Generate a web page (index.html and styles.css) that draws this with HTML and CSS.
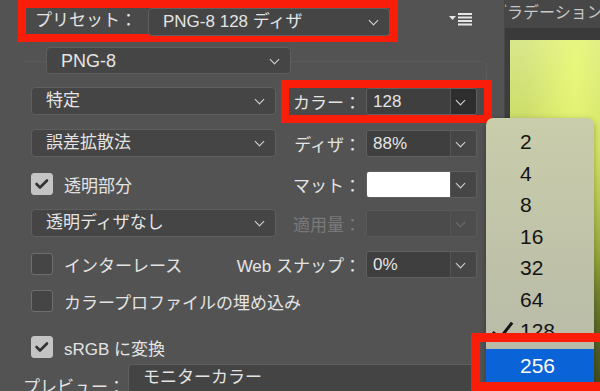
FILE: index.html
```html
<!DOCTYPE html>
<html lang="ja">
<head>
  <meta charset="UTF-8">
  <meta name="viewport" content="width=device-width, initial-scale=1.0">
  <title>Web 用に保存</title>
  <link rel="stylesheet" href="styles.css">
</head>
<body>
  <div class="window">
    <div class="panel">
      <!-- Preset -->
      <div class="preset-row">
        <div class="preset callout">
          <span class="preset-label">プリセット：</span>
          <div class="preset-select select">PNG-8 128 ディザ</div>
        </div>
        <svg class="panel-menu" width="24" height="14" viewBox="0 0 24 14">
          <polygon points="0,4 7,4 3.5,8" fill="#e6e6e6"/>
          <rect x="9" y="1" width="14" height="2" fill="#e6e6e6"/>
          <rect x="9" y="4.5" width="14" height="2" fill="#e6e6e6"/>
          <rect x="9" y="8" width="14" height="2" fill="#e6e6e6"/>
          <rect x="9" y="11.5" width="14" height="2" fill="#e6e6e6"/>
        </svg>
      </div>

      <!-- Format settings -->
      <div class="group">
        <div class="select format">PNG-8</div>

        <div class="row row-a">
          <div class="cell"><div class="select">特定</div></div>
          <div class="option">
            <div class="option-box callout">
              <span class="option-label">カラー：</span>
              <div class="combo">
                <span class="combo-value">128</span>
                <span class="combo-button active"></span>
              </div>
            </div>
          </div>
        </div>

        <div class="row row-b">
          <div class="cell"><div class="select">誤差拡散法</div></div>
          <div class="option">
            <span class="option-label">ディザ：</span>
            <div class="combo">
              <span class="combo-value">88%</span>
              <span class="combo-button"></span>
            </div>
          </div>
        </div>

        <div class="row row-c">
          <div class="cell"><label class="check checked">透明部分</label></div>
          <div class="option">
            <span class="option-label">マット：</span>
            <div class="combo">
              <span class="combo-value swatch"></span>
              <span class="combo-button"></span>
            </div>
          </div>
        </div>

        <div class="row row-d">
          <div class="cell"><div class="select">透明ディザなし</div></div>
          <div class="option disabled">
            <span class="option-label">適用量：</span>
            <div class="combo">
              <span class="combo-value"></span>
              <span class="combo-button"></span>
            </div>
          </div>
        </div>

        <div class="row row-e">
          <div class="cell"><label class="check">インターレース</label></div>
          <div class="option">
            <span class="option-label">Web スナップ：</span>
            <div class="combo">
              <span class="combo-value">0%</span>
              <span class="combo-button"></span>
            </div>
          </div>
        </div>

        <div class="row row-f">
          <div class="cell"><label class="check">カラープロファイルの埋め込み</label></div>
        </div>

        <div class="row row-g">
          <div class="cell"><label class="check checked">sRGB に変換</label></div>
        </div>
      </div>

      <div class="preview-row">
        <span class="preview-label">プレビュー：</span>
        <div class="select preview-select">モニターカラー</div>
      </div>
    </div>

    <div class="document">
      <div class="doc-tab">グラデーション</div>
      <div class="doc-bar"></div>
      <div class="doc-body">
        <div class="canvas"></div>
      </div>
    </div>
  </div>

  <!-- Colour count menu -->
  <ul class="popup">
    <li>2</li>
    <li>4</li>
    <li>8</li>
    <li>16</li>
    <li>32</li>
    <li>64</li>
    <li class="current">128</li>
    <li class="selected">256</li>
  </ul>
  <div class="callout-menu"></div>
</body>
</html>
```

FILE: styles.css
```css
* {
  box-sizing: border-box;
}

body {
  margin: 0;
  width: 600px;
  height: 391px;
  overflow: hidden;
  font-family: "Liberation Sans", "Noto Sans CJK JP", sans-serif;
  font-size: 17px;
  color: #e4e4e4;
  background: #535353;
  position: relative;
}

.window {
  display: flex;
  height: 391px;
}

.panel {
  width: 505px;
  flex-shrink: 0;
  border-right: 1px solid #474747;
}

/* red annotation frame */
.callout {
  border: 8px solid #fa1e0a;
}

.preset-row {
  display: flex;
  align-items: center;
  height: 42px;
}

.preset {
  display: flex;
  width: 380px;
  height: 42px;
  margin-left: 18px;
  background: #4a4a4a;
}

.preset-label {
  width: 122px;
  padding-left: 9px;
  line-height: 26px;
  white-space: nowrap;
}

.preset-select {
  flex: 1;
  height: 26px;
  padding-left: 13px;
  border-radius: 0;
  background: #424242;
}

.panel-menu {
  margin-left: 51px;
  margin-top: -5px;
}

/* drop-down fields */
.select {
  position: relative;
  height: 28px;
  padding-left: 14px;
  line-height: 26px;
  white-space: nowrap;
  background: #454545;
  border: 1px solid #5f5f5f;
  border-radius: 4px;
}

.select::after,
.combo-button::after {
  content: "";
  position: absolute;
  top: 8px;
  right: 12px;
  width: 6px;
  height: 6px;
  border-right: 1.5px solid #d8d8d8;
  border-bottom: 1.5px solid #d8d8d8;
  transform: rotate(45deg);
}

.group {
  margin: 19px 17px 0 22px;
  padding: 0 9px 0 9px;
  height: 290px;
  border-top: 1px solid #5a5a5a;
  border-right: 1px solid #5a5a5a;
  border-top-right-radius: 6px;
}

.format {
  width: 245px;
  height: 27px;
  margin: -15px 0 0 15px;
  font-size: 18px;
}

.row {
  display: flex;
  align-items: center;
  height: 28px;
}

.row-a { margin-top: 13px; }
.row-b { margin-top: 14px; }
.row-c { margin-top: 13px; }
.row-d { margin-top: 11px; }
.row-e { margin-top: 13px; }
.row-f { margin-top: 9px; }
.row-g { margin-top: 18px; }

.cell {
  width: 245px;
  flex-shrink: 0;
}

.option {
  flex: 1;
  min-width: 0;
  display: flex;
  align-items: center;
  justify-content: flex-end;
  gap: 5px;
  white-space: nowrap;
}

.option > * {
  flex-shrink: 0;
}

.option-box {
  display: flex;
  align-items: center;
  gap: 5px;
  margin: -8px -15px -8px -12px;
  padding: 0 7px 0 4px;
  background: #4a4a4a;
}

.option-label {
  text-align: right;
}

.option.disabled {
  color: #7a7a7a;
}

.combo {
  display: flex;
  flex-shrink: 0;
  width: 111px;
  height: 27px;
  border: 1px solid #5f5f5f;
  border-radius: 3px;
  overflow: hidden;
}

.combo-value {
  width: 84px;
  padding-left: 6px;
  line-height: 25px;
  background: #3f3f3f;
  border-right: 1px solid #555;
}

.combo-value.swatch {
  background: #fff;
}

.combo-button {
  position: relative;
  flex: 1;
  background: #464646;
}

.combo-button.active {
  background: #2e2e2e;
}

.disabled .combo {
  border-color: #595959;
}

.disabled .combo-value {
  background: #4b4b4b;
}

.disabled .combo-button {
  background: #4d4d4d;
}

.disabled .combo-button::after {
  border-color: #6f6f6f;
}

/* checkboxes */
.check {
  display: flex;
  align-items: center;
  gap: 11px;
  white-space: nowrap;
}

.check::before {
  content: "";
  flex-shrink: 0;
  width: 20px;
  height: 20px;
  border: 1.5px solid #6e6e6e;
  border-radius: 3px;
  background: #454545;
}

.check.checked::before {
  border-color: #c4c4c4;
  background: #c4c4c4 url("data:image/svg+xml,%3Csvg xmlns='http://www.w3.org/2000/svg' width='20' height='20'%3E%3Cpolyline points='4.5,10 8,13.5 15,6.5' fill='none' stroke='%23333' stroke-width='2.6' stroke-linecap='round' stroke-linejoin='round'/%3E%3C/svg%3E") center / 20px no-repeat;
}

.preview-row {
  display: flex;
  align-items: center;
  margin-top: 8px;
  padding-left: 23px;
}

.preview-label {
  width: 105px;
  padding-top: 14px;
}

.preview-select {
  width: 350px;
  height: 30px;
  background: #444;
}

.preview-select::after {
  display: none;
}

/* document window */
.document {
  flex: 1;
  display: flex;
  flex-direction: column;
  background: #3d3d3d;
}

.doc-tab {
  height: 28px;
  line-height: 26px;
  font-size: 16px;
  color: #c8c8c8;
  background: #474747;
  white-space: nowrap;
  overflow: hidden;
  text-indent: -14px;
}

.doc-bar {
  height: 12px;
  background: #3a3a3a;
}

.doc-body {
  flex: 1;
  padding-left: 5px;
}

.canvas {
  height: 100%;
  background:
    radial-gradient(ellipse at 70% 10%, rgba(240, 255, 120, 0.7), rgba(240, 255, 120, 0) 55%),
    linear-gradient(to bottom, #d9e78c 0%, #c9da5c 30%, #8c9c36 62%, #556226 85%, #3f4a1e 100%);
}

/* colour count menu */
.popup {
  position: absolute;
  left: 486px;
  top: 118px;
  width: 108px;
  height: 280px;
  margin: 0;
  padding: 8px 0 0;
  list-style: none;
  border-radius: 7px;
  background: linear-gradient(to bottom, #c9cdab, #bfc2a8 50%, #b6b8a8);
  color: #141414;
  font-size: 21px;
  box-shadow: 0 2px 6px rgba(0, 0, 0, 0.3);
}

.popup li {
  height: 31.5px;
  line-height: 31.5px;
  padding-left: 34px;
  position: relative;
}

.popup .current::before {
  content: "";
  position: absolute;
  left: 11px;
  top: 3px;
  width: 8px;
  height: 18px;
  border-right: 3px solid #141414;
  border-bottom: 3px solid #141414;
  transform: rotate(38deg);
}

.popup .selected {
  margin-top: 2px;
  height: 33px;
  line-height: 33px;
  background: #0b63d8;
  color: #fff;
}

.callout-menu {
  position: absolute;
  left: 471px;
  top: 333px;
  width: 140px;
  height: 58px;
  border: 9px solid #fa1e0a;
}
```
